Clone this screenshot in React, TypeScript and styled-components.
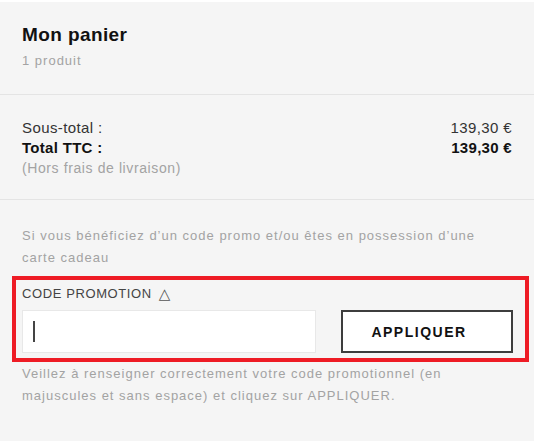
import React from "react";
import styled, { createGlobalStyle } from "styled-components";

const Global = createGlobalStyle`
  html, body { margin: 0; padding: 0; background: #ffffff; }
  body { font-family: "Liberation Sans", Arial, sans-serif; }
  * { box-sizing: border-box; }
`;

const Panel = styled.div`
  margin-top: 2px;
  width: 534px;
  min-height: 439px;
  background: #f5f5f5;
  display: flex;
  flex-direction: column;
`;

const Section = styled.section<{ $pt: number; $pb: number; $divider?: boolean }>`
  padding: ${(p) => p.$pt}px 22px ${(p) => p.$pb}px;
  border-bottom: ${(p) => (p.$divider ? "1px solid #e4e4e4" : "none")};
  display: flex;
  flex-direction: column;
`;

const Title = styled.h1`
  margin: 0;
  font-size: 19px;
  line-height: 24px;
  font-weight: 700;
  letter-spacing: 0.4px;
  color: #111;
`;

const Muted = styled.div<{ $size?: number; $lh?: number; $mt?: number; $ls?: number }>`
  margin-top: ${(p) => p.$mt ?? 0}px;
  font-size: ${(p) => p.$size ?? 13}px;
  line-height: ${(p) => p.$lh ?? 20}px;
  color: #a3a3a3;
  letter-spacing: ${(p) => p.$ls ?? 1}px;
`;

const Row = styled.div<{ $bold?: boolean }>`
  display: flex;
  justify-content: space-between;
  font-size: 15px;
  line-height: 20px;
  letter-spacing: ${(p) => (p.$bold ? "0.3px" : "0.4px")};
  font-weight: ${(p) => (p.$bold ? 700 : 400)};
  color: ${(p) => (p.$bold ? "#111" : "#333")};
`;

const Highlight = styled.div`
  margin: 7px -17px 0 -10px;
  border: 4px solid #ee1c25;
  padding: 4px 12px 5px 6px;
  display: flex;
  flex-direction: column;
`;

const Label = styled.div`
  font-size: 13px;
  line-height: 20px;
  letter-spacing: 0.6px;
  color: #444;
  text-transform: uppercase;
  display: flex;
  align-items: center;
  gap: 7px;
`;

const Tri = styled.span`
  font-family: "DejaVu Sans", sans-serif;
  font-size: 15px;
  line-height: 20px;
  color: #555;
`;

const FormRow = styled.div`
  margin-top: 6px;
  display: flex;
  align-items: stretch;
  gap: 25px;
  height: 43px;
`;

const InputBox = styled.div`
  width: 294px;
  background: #fff;
  border: 1px solid #e8e8e8;
  display: flex;
  align-items: center;
  padding-left: 10px;
`;

const Caret = styled.span`
  display: block;
  width: 2px;
  height: 21px;
  background: #444;
`;

const Button = styled.button`
  flex: 1;
  background: #fff;
  border: 2px solid #3d3d3d;
  padding: 0 16px 0 0;
  font-family: "Liberation Sans", Arial, sans-serif;
  font-weight: 700;
  font-size: 14px;
  letter-spacing: 1.5px;
  color: #111;
  cursor: pointer;
`;

export default function App() {
  return (
    <>
      <Global />
      <Panel>
        <Section $pt={21} $pb={23} $divider>
          <Title>Mon panier</Title>
          <Muted $mt={4}>1 produit</Muted>
        </Section>
        <Section $pt={23} $pb={21} $divider>
          <Row>
            <span>Sous-total :</span>
            <span>139,30 €</span>
          </Row>
          <Row $bold>
            <span>Total TTC :</span>
            <span>139,30 €</span>
          </Row>
          <Muted $size={14} $ls={0.6}>(Hors frais de livraison)</Muted>
        </Section>
        <Section $pt={25} $pb={20}>
          <Muted $lh={22}>
            Si vous bénéficiez d’un code promo et/ou êtes en possession d’une
            <br />
            carte cadeau
          </Muted>
          <Highlight>
            <Label>
              Code promotion <Tri>△</Tri>
            </Label>
            <FormRow>
              <InputBox>
                <Caret />
              </InputBox>
              <Button>APPLIQUER</Button>
            </FormRow>
          </Highlight>
          <Muted $lh={22} $mt={1}>
            Veillez à renseigner correctement votre code promotionnel (en
            <br />
            majuscules et sans espace) et cliquez sur APPLIQUER.
          </Muted>
        </Section>
      </Panel>
    </>
  );
}
